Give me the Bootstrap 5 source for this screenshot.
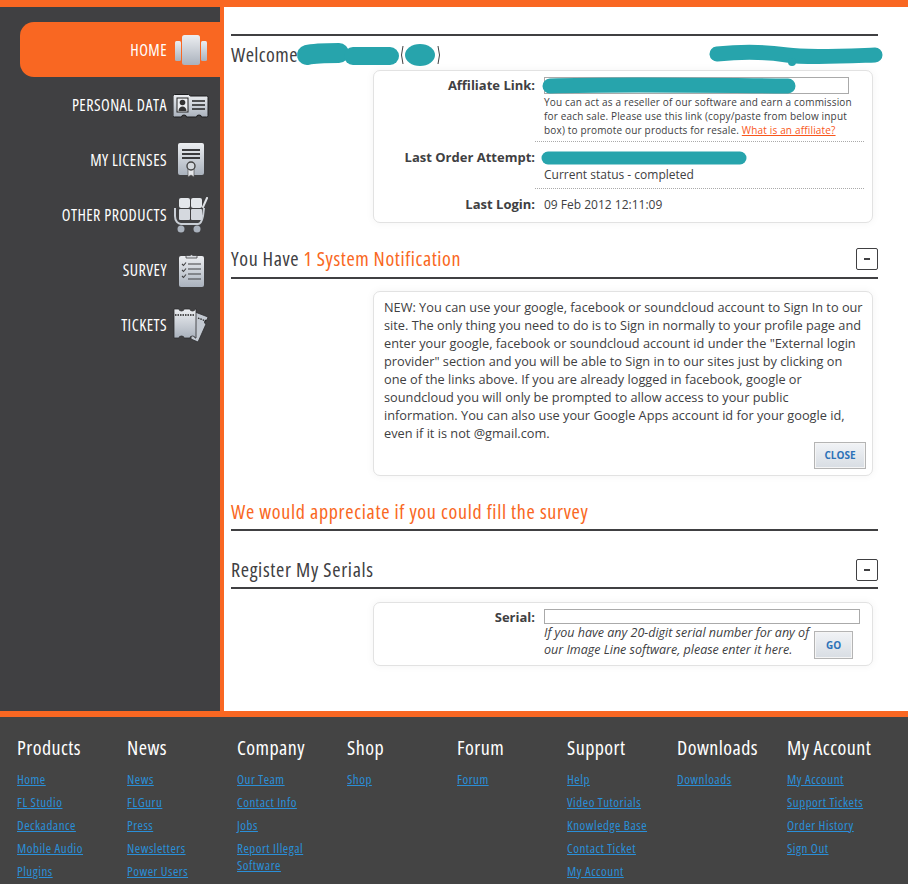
<!DOCTYPE html>
<html lang="en">
<head>
<meta charset="utf-8">
<title>My Account</title>
<link href="https://cdn.jsdelivr.net/npm/bootstrap@5.3.0/dist/css/bootstrap.min.css" rel="stylesheet">
<style>
html,body{height:884px;overflow:hidden}
body{font-family:"Open Sans",sans-serif;font-size:12px;color:#404042;background:#fff}
.narrow{font-family:"Open Sans",sans-serif;font-stretch:75%}
.shell{border-top:7px solid #f96722;height:711px}
.side{width:224px;flex:none;background:#404042;border-right:4px solid #f96722;padding-top:15px}
.side-item{height:55px;padding-right:11px;color:#fff;font-size:16px;gap:6px;letter-spacing:.45px}
.side-item.on{margin-left:20px;background:#f96722;border-radius:14px 0 0 14px}
.side-ico{width:36px;height:36px;flex:none}
.main-col{padding:27px 30px 0 7px;width:684px}
.rule-top{border-top:2px solid #404042}
.sec-head{height:44px;border-bottom:2px solid #404042;font-size:20px;letter-spacing:.58px;line-height:24px;padding-top:6px}
.sec-wide{letter-spacing:.68px;padding-top:8px}
.orange{color:#f96722}
.mini{width:22px;height:22px;border:1px solid #404042;border-radius:2px;background:#fff;padding:0;line-height:1}
.mini i{display:block;width:6px;height:2px;background:#404042;margin:auto}
.panel-box{margin-left:142px;width:500px;border:1px solid #e2e2e2;border-radius:7px;background:#fff;box-shadow:0 0 8px rgba(0,0,0,.05)}
.lab{width:170px;flex:none;text-align:right;font-weight:700;font-size:13px;padding-right:9px;color:#404042;line-height:17px}
.aff{font-size:10px;line-height:14px;letter-spacing:.17px;color:#404042}
.aff a{color:#f9561a}
.fld{height:17px;border:1px solid #aaa;background:#fff}
.dots{border-top:1px dotted #aaa;margin:0 8px 0 161px}
.blob{display:block;overflow:visible;filter:blur(.6px)}
.blob-over{position:absolute;left:0;top:0}
.note{font-size:12.75px;line-height:18px;padding:6px 8px 0 10px;height:185px;color:#404042}
.act{font-size:10px;font-weight:700;color:#2c72b8;border:1px solid #b4b4b4;background:linear-gradient(#f1f3f6,#d8dde3);box-shadow:inset 0 0 0 1px #f5f5f5;padding:0;border-radius:0;height:27px}
.hint{font-size:12.5px;line-height:17px;font-style:italic;color:#404042;white-space:nowrap}
.foot{background:#444;border-top:6px solid #f96722;padding:19px 0 0 17px;height:173px}
.foot-col{width:110px;flex:none;padding-right:8px}
.foot-col h5{font-size:20px;font-weight:400;color:#fff;line-height:24px;margin:0 0 11px;letter-spacing:.45px;white-space:nowrap}
.foot-col a{display:block;color:#2a8fd8;font-size:13px;line-height:17px;margin-bottom:6px;letter-spacing:.5px}
</style>
</head>
<body>
<svg width="0" height="0" class="d-block">
<defs><linearGradient id="ig" x1="0" y1="0" x2="0" y2="1"><stop offset="0" stop-color="#eceef1"/><stop offset="1" stop-color="#aab2bd"/></linearGradient></defs>
</svg>
<div class="shell d-flex">
<nav class="side narrow">
<div class="side-item on d-flex align-items-center justify-content-end">HOME
<svg class="side-ico" viewBox="0 0 36 36"><rect x="2" y="9" width="6" height="20" rx="1.500" fill="url(#ig)"/><rect x="28" y="9" width="6" height="20" rx="1.500" fill="url(#ig)"/><rect x="9" y="3" width="18" height="30" rx="2.500" fill="url(#ig)"/></svg></div>
<div class="side-item d-flex align-items-center justify-content-end">PERSONAL DATA
<svg class="side-ico" viewBox="0 0 36 36"><path d="M1.500 7.500h14l2 1.500h16a1.500 1.500 0 0 1 1.500 1.500v18a1.500 1.500 0 0 1-1.500 1.500h-5a2.500 2 0 0 0-5 0h-10a2.500 2 0 0 0-5 0h-7a1.500 1.500 0 0 1-1.500-1.500v-20z" fill="url(#ig)" stroke="#1c1c1e"/><rect x="4" y="11" width="11" height="14" fill="#eceef1" stroke="#222"/><circle cx="9.500" cy="15.500" r="2.800" fill="#333"/><path d="M5.500 24c0-6 8-6 8 0z" fill="#333"/><path d="M19 14h13M19 18h13M19 22h13" stroke="#222" stroke-width="1.400"/></svg></div>
<div class="side-item d-flex align-items-center justify-content-end">MY LICENSES
<svg class="side-ico" viewBox="0 0 36 36"><path d="M7 1h22a2 2 0 0 1 2 2v28a2 2 0 0 1-2 2H7a2 2 0 0 1-2-2V3a2 2 0 0 1 2-2z" fill="url(#ig)"/><path d="M9 8h18M9 12h18M9 16h18" stroke="#3a3a3c" stroke-width="2"/><path d="M15 25v10l3-2 3 2V25z" fill="#e6e8ec" stroke="#555" stroke-width=".7"/><circle cx="18" cy="24" r="4" fill="#d5d9de" stroke="#444" stroke-width="1.400"/></svg></div>
<div class="side-item d-flex align-items-center justify-content-end">OTHER PRODUCTS
<svg class="side-ico" viewBox="0 0 36 36"><path d="M34 1l-4 9" stroke="#dfe2e6" stroke-width="2" stroke-linecap="round"/><path d="M2 11v8c0 5 3 8 6 8h17c3 0 4-3 5-8l1-8" fill="none" stroke="#c9ced5" stroke-width="2"/><rect x="6" y="1" width="11" height="10" rx="2" fill="#e4e7eb"/><rect x="18" y="1" width="11" height="10" rx="2" fill="#e4e7eb"/><rect x="6" y="12" width="11" height="11" rx="1" fill="#d5d9df"/><rect x="18" y="12" width="11" height="11" rx="1" fill="#d5d9df"/><circle cx="8" cy="32" r="3.500" fill="#aab2bd"/><circle cx="24" cy="32" r="3.500" fill="#aab2bd"/></svg></div>
<div class="side-item d-flex align-items-center justify-content-end">SURVEY
<svg class="side-ico" viewBox="0 0 36 36"><rect x="6" y="4" width="25" height="31" rx="2" fill="url(#ig)"/><path d="M13 6V3.500h4a2 2 0 0 1 3 0h4V6z" fill="#d9dce1" stroke="#404042" stroke-width=".8"/><path d="M9 12l1.500 1.500 2.500-3M9 18l1.500 1.500 2.500-3M9 24l1.500 1.500 2.500-3" fill="none" stroke="#404042" stroke-width="1.100"/><path d="M15 12h13M15 17h13M15 22h13M15 27h13" stroke="#404042" stroke-width="1.100"/></svg></div>
<div class="side-item d-flex align-items-center justify-content-end">TICKETS
<svg class="side-ico" viewBox="0 0 36 36"><path d="M22 5l13 5-1 3a2 2 0 0 0-1 4l-8 18-7-3V8z" fill="#c3c9d1" stroke="#2c2c2e" stroke-width=".8"/><path d="M1 2h5a2.500 2 0 0 0 5 0h6a2.500 2 0 0 0 5 0h1v29h-1a2.500 2 0 0 0-5 0h-6a2.500 2 0 0 0-5 0H1z" fill="url(#ig)" stroke="#2c2c2e" stroke-width=".8"/><path d="M2 8h20M25 11l8 3" stroke="#222" stroke-width="1.300" stroke-dasharray="1.500 1"/></svg></div>
</nav>
<main class="main-col">
<div class="rule-top"></div>
<div class="narrow d-flex justify-content-between align-items-start" style="height:34px">
<div class="d-flex align-items-center" style="font-size:20px;letter-spacing:.4px;padding-top:7px;line-height:24px">Welcome
<svg class="blob" width="140" height="24" viewBox="0 0 140 24"><path d="M9 12c8-2 20-2 32-2" stroke="#27a4ac" stroke-width="20" stroke-linecap="round" fill="none"/><path d="M55 13h37" stroke="#27a4ac" stroke-width="18" stroke-linecap="round" fill="none"/><ellipse cx="122" cy="12" rx="15" ry="11" fill="#27a4ac"/><path d="M105 3q-3 9 0 18M140 3q3 9 0 18" stroke="#404042" fill="none"/></svg></div>
<svg class="blob" style="margin:9px -7px 0 0" width="177" height="22" viewBox="0 0 177 22"><path d="M9 9c30-3 50-2 70 1s60 1 88 0" stroke="#27a4ac" stroke-width="15" stroke-linecap="round" fill="none"/><circle cx="84" cy="17" r="4" fill="#27a4ac"/></svg>
</div>
<section class="panel-box" style="height:153px;padding-top:6px">
<div class="d-flex"><div class="lab">Affiliate Link:</div>
<div class="aff position-relative" style="width:315px">
<div class="fld" style="width:305px"></div>
<svg class="blob blob-over" width="252" height="18" viewBox="0 0 252 18"><path d="M6 9c60-2 130-1 238 0" stroke="#27a4ac" stroke-width="15" stroke-linecap="round" fill="none"/></svg>
<div style="padding-top:1px;white-space:nowrap">You can act as a reseller of our software and earn a commission<br>for each sale. Please use this link (copy/paste from below input<br>box) to promote our products for resale. <a href="#">What is an affiliate?</a></div>
</div></div>
<div class="dots" style="margin-top:4px"></div>
<div class="d-flex" style="padding-top:7px"><div class="lab">Last Order Attempt:</div>
<div>
<svg class="blob" style="margin:1px 0 0 -3px" width="206" height="16" viewBox="0 0 206 16"><path d="M7 8h192" stroke="#27a4ac" stroke-width="13" stroke-linecap="round" fill="none"/></svg>
<div style="padding-top:1px;line-height:16px">Current status - completed</div>
</div></div>
<div class="dots" style="margin-top:5px"></div>
<div class="d-flex" style="padding-top:7px;line-height:17px"><div class="lab">Last Login:</div><div>09 Feb 2012 12:11:09</div></div>
</section>
<div class="sec-head narrow d-flex justify-content-between align-items-center" style="margin-top:12px">
<div>You Have <span class="orange">1 System Notification</span></div>
<button class="mini" type="button" aria-label="Collapse"><i></i></button>
</div>
<section class="panel-box note d-flex flex-column" style="margin-top:12px">
<div class="flex-grow-1">NEW: You can use your google, facebook or soundcloud account to Sign In to our site. The only thing you need to do is to Sign in normally to your profile page and enter your google, facebook or soundcloud account id under the "External login provider" section and you will be able to Sign in to our sites just by clicking on one of the links above. If you are already logged in facebook, google or soundcloud you will only be prompted to allow access to your public information. You can also use your Google Apps account id for your google id, even if it is not @gmail.com.</div>
<div class="d-flex justify-content-end" style="margin:0 -2px 8px 0"><button class="btn act" style="width:52px" type="button">CLOSE</button></div>
</section>
<div class="sec-head sec-wide narrow orange d-flex align-items-center" style="margin-top:11px">We would appreciate if you could fill the survey</div>
<div class="sec-head sec-wide narrow d-flex justify-content-between align-items-center" style="margin-top:14px">
<div>Register My Serials</div>
<button class="mini" type="button" aria-label="Collapse"><i></i></button>
</div>
<section class="panel-box" style="margin-top:13px;height:64px;padding-top:6px">
<div class="d-flex"><div class="lab">Serial:</div>
<div style="width:316px">
<div class="fld" style="height:15px"></div>
<div class="d-flex"><div class="hint flex-grow-1">If you have any 20-digit serial number for any of<br>our Image Line software, please enter it here.</div>
<button class="btn act" style="width:39px;height:28px;margin:7px 7px 0 0;flex:none" type="button">GO</button></div>
</div></div>
</section>
</main>
</div>
<footer class="foot narrow d-flex">
<div class="foot-col"><h5>Products</h5><a href="#">Home</a><a href="#">FL Studio</a><a href="#">Deckadance</a><a href="#">Mobile Audio</a><a href="#">Plugins</a></div>
<div class="foot-col"><h5>News</h5><a href="#">News</a><a href="#">FLGuru</a><a href="#">Press</a><a href="#">Newsletters</a><a href="#">Power Users</a></div>
<div class="foot-col"><h5>Company</h5><a href="#">Our Team</a><a href="#">Contact Info</a><a href="#">Jobs</a><a href="#" style="max-width:72px">Report Illegal Software</a></div>
<div class="foot-col"><h5>Shop</h5><a href="#">Shop</a></div>
<div class="foot-col"><h5>Forum</h5><a href="#">Forum</a></div>
<div class="foot-col"><h5>Support</h5><a href="#">Help</a><a href="#">Video Tutorials</a><a href="#">Knowledge Base</a><a href="#">Contact Ticket</a><a href="#">My Account</a></div>
<div class="foot-col"><h5>Downloads</h5><a href="#">Downloads</a></div>
<div class="foot-col"><h5>My Account</h5><a href="#">My Account</a><a href="#">Support Tickets</a><a href="#">Order History</a><a href="#">Sign Out</a></div>
</footer>
</body>
</html>
